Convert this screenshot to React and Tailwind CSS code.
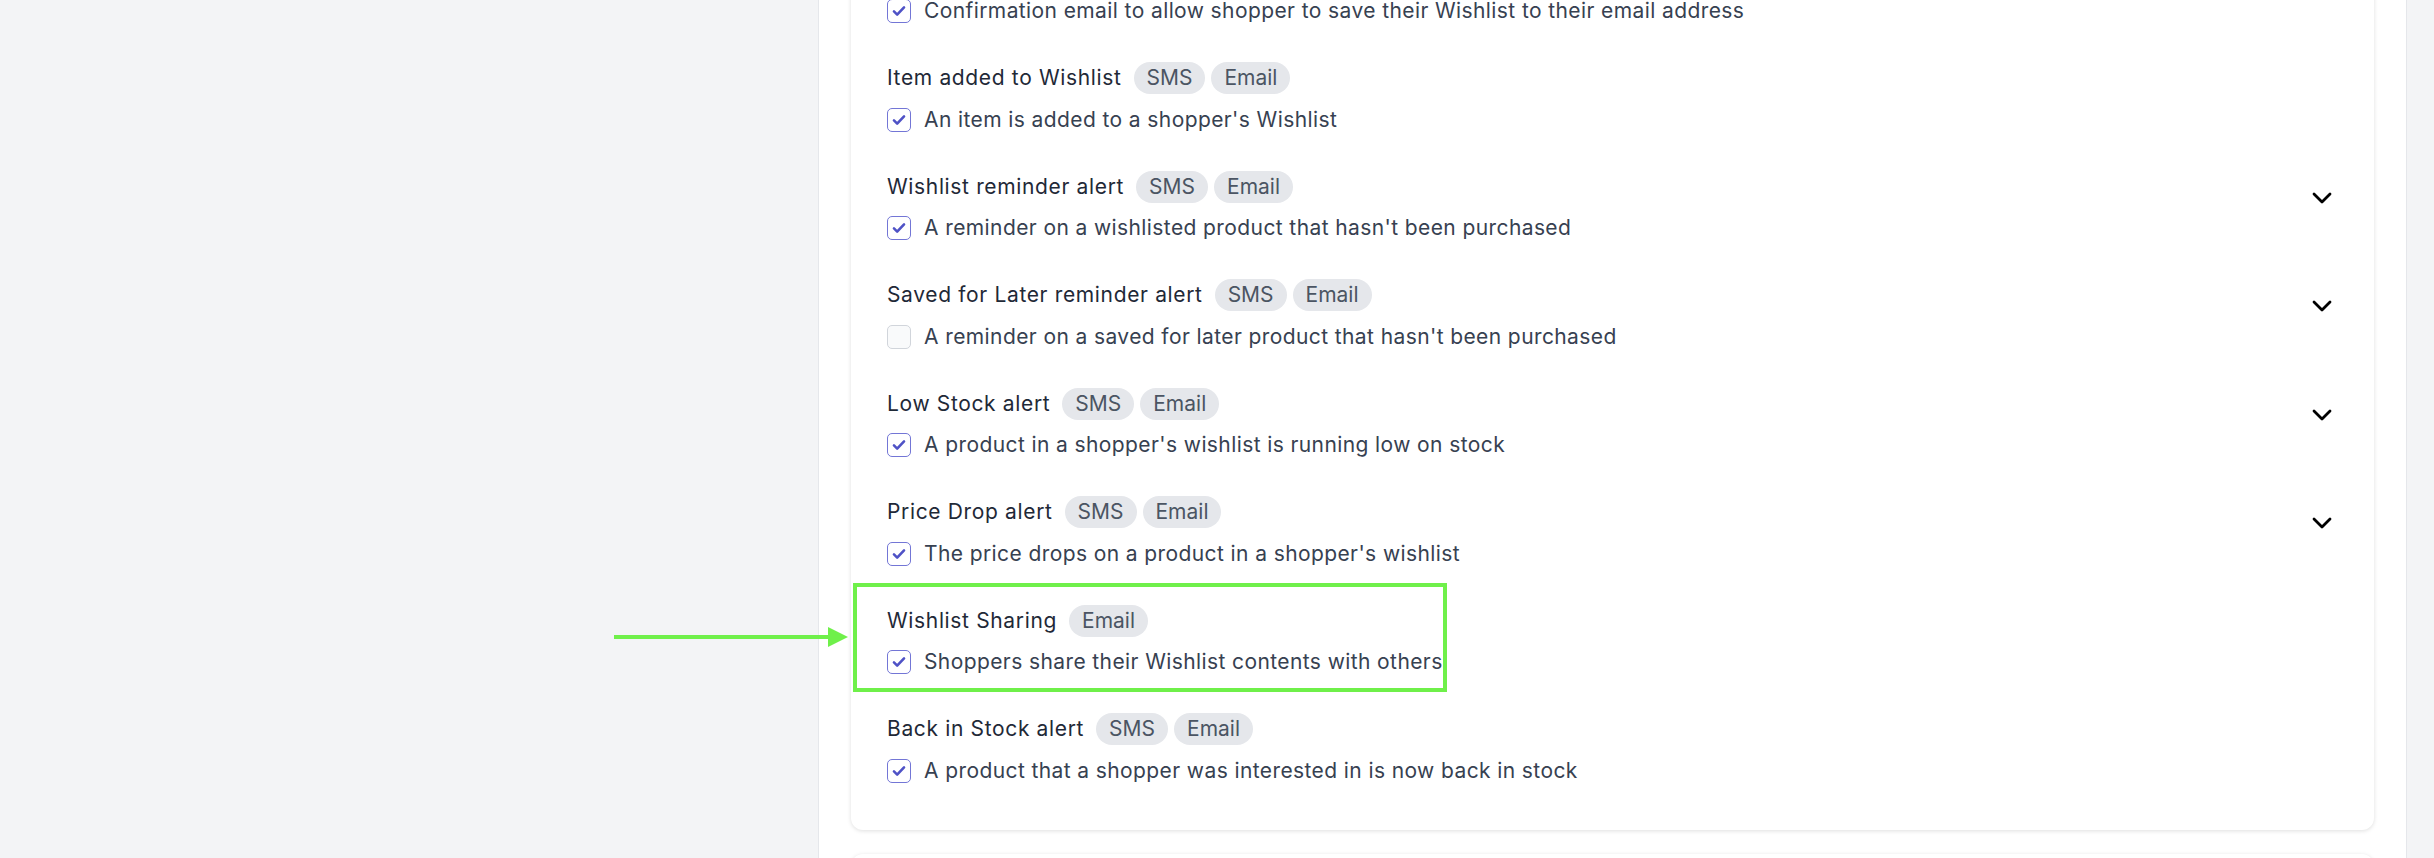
import React from "react";

const items = [
  { title: "", badges: [], desc: "Confirmation email to allow shopper to save their Wishlist to their email address", checked: true },
  { title: "Item added to Wishlist", badges: ["SMS", "Email"], desc: "An item is added to a shopper's Wishlist", checked: true },
  { title: "Wishlist reminder alert", badges: ["SMS", "Email"], desc: "A reminder on a wishlisted product that hasn't been purchased", checked: true, chevron: true },
  { title: "Saved for Later reminder alert", badges: ["SMS", "Email"], desc: "A reminder on a saved for later product that hasn't been purchased", checked: false, chevron: true },
  { title: "Low Stock alert", badges: ["SMS", "Email"], desc: "A product in a shopper's wishlist is running low on stock", checked: true, chevron: true },
  { title: "Price Drop alert", badges: ["SMS", "Email"], desc: "The price drops on a product in a shopper's wishlist", checked: true, chevron: true },
  { title: "Wishlist Sharing", badges: ["Email"], desc: "Shoppers share their Wishlist contents with others", checked: true, highlight: true },
  { title: "Back in Stock alert", badges: ["SMS", "Email"], desc: "A product that a shopper was interested in is now back in stock", checked: true },
];

function Checkbox({ checked }) {
  if (!checked) {
    return <div className="w-[24px] h-[24px] shrink-0 rounded-[5px] border border-[#d1d5db] bg-[#f9fafb]" />;
  }
  return (
    <div className="w-[24px] h-[24px] shrink-0 rounded-[5px] border-[1.5px] border-[#7376d6] bg-white flex items-center justify-center">
      <svg width="22" height="22" viewBox="0 0 24 24" fill="none">
        <path d="M6.5 12.5 L10 16 L17.5 8" stroke="#4f52c6" strokeWidth="2.8" strokeLinecap="round" strokeLinejoin="round" />
      </svg>
    </div>
  );
}

function Chevron() {
  return (
    <div className="w-[32px] h-[12px] flex items-center justify-center mt-[21px] shrink-0">
      <svg width="20" height="12" viewBox="0 0 20 12" fill="none">
        <path d="M2 2 L10 10 L18 2" stroke="#000" strokeWidth="2.8" strokeLinecap="round" strokeLinejoin="round" />
      </svg>
    </div>
  );
}

function Item({ item }) {
  return (
    <div className="relative flex justify-between">
      <div className="flex flex-col">
        <div className="flex items-center h-[32px] gap-[6px]">
          {item.title && (
            <span className="text-[21px] tracking-[0.65px] text-[#1f2937] mr-[6px] whitespace-nowrap">{item.title}</span>
          )}
          {item.badges.map((b) => (
            <span key={b} className="h-[32px] px-[13px] rounded-full bg-[#e5e7eb] text-[#4b5563] text-[21px] flex items-center">
              {b}
            </span>
          ))}
        </div>
        <div className="flex items-center h-[25px] mt-[13px] gap-[13px]">
          <Checkbox checked={item.checked} />
          <span className="text-[21px] tracking-[0.4px] text-[#374151] whitespace-nowrap">{item.desc}</span>
        </div>
      </div>
      {item.chevron && <Chevron />}
      {item.highlight && (
        <div className="absolute left-[-34px] top-[-22px] w-[594px] h-[109px] border-[4px] border-[#6ff04a] pointer-events-none" />
      )}
    </div>
  );
}

export default function App() {
  return (
    <div className="relative w-[2434px] h-[858px] overflow-hidden flex bg-white" style={{ fontFamily: "Inter, 'Noto Sans', sans-serif" }}>
      <div className="w-[819px] h-full bg-[#f3f4f6] border-r border-[#e5e7eb] shrink-0" />
      <div className="flex-1 h-full bg-white px-[32px] flex flex-col gap-[24px]">
        <div className="-mt-[82.5px] bg-white rounded-[12px] shadow-[0_1px_4px_rgba(0,0,0,0.13)] pl-[36px] pr-[36px] pt-[36px] pb-[46.5px] flex flex-col gap-[38.5px] shrink-0">
          {items.map((it, i) => (
            <Item key={i} item={it} />
          ))}
        </div>
        <div className="bg-white rounded-[12px] shadow-[0_1px_4px_rgba(0,0,0,0.13)] h-[200px] shrink-0" />
      </div>
      <div className="w-[28px] h-full bg-[#f3f4f6] border-l border-[#e5e7eb] shrink-0" />
      <svg className="absolute left-[612px] top-[625px]" width="240" height="24" viewBox="0 0 240 24" fill="none">
        <line x1="2" y1="12" x2="220" y2="12" stroke="#6ff04a" strokeWidth="4" />
        <polygon points="216,2 236,12 216,22" fill="#6ff04a" />
      </svg>
    </div>
  );
}
